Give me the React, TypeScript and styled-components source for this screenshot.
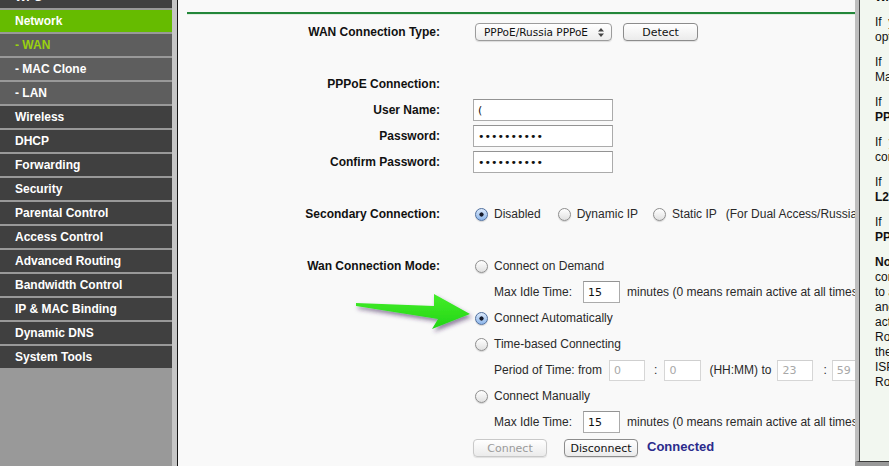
import React from "react";
import styled, { createGlobalStyle } from "styled-components";

const GlobalStyle = createGlobalStyle`
  html, body {
    margin: 0;
    padding: 0;
    height: 100%;
    overflow: hidden;
  }
  body {
    font-family: "Liberation Sans", Arial, sans-serif;
    font-size: 12px;
    background: #999999;
  }
`;

const Page = styled.div`
  display: flex;
  width: 889px;
  height: 466px;
  overflow: hidden;
`;

/* ---------- sidebar ---------- */

const SideFrame = styled.div`
  flex: 0 0 auto;
  height: 100%;
  border-right: 1px solid #161616;
`;

const Sidebar = styled.nav`
  width: 172px;
  height: 100%;
  background: #999999;
  border-right: 5px solid #c6c6c6;
  overflow: hidden;
`;

const MenuList = styled.div`
  display: flex;
  flex-direction: column;
  gap: 2px;
  margin-top: -14px;
`;

type MenuKind = "main" | "sub" | "active" | "current";

const MenuItem = styled.div<{ $kind: MenuKind }>`
  height: 22px;
  display: flex;
  align-items: center;
  padding-left: 15px;
  font-weight: bold;
  font-size: 12px;
  white-space: nowrap;
  color: ${(p) => (p.$kind === "current" ? "#99d10f" : "#ffffff")};
  background: ${(p) =>
    p.$kind === "active"
      ? "#66bb00"
      : p.$kind === "sub" || p.$kind === "current"
      ? "#5e5e5e"
      : "#404040"};
`;

const menu: { label: string; kind: MenuKind }[] = [
  { label: "WPS", kind: "main" },
  { label: "Network", kind: "active" },
  { label: "- WAN", kind: "current" },
  { label: "- MAC Clone", kind: "sub" },
  { label: "- LAN", kind: "sub" },
  { label: "Wireless", kind: "main" },
  { label: "DHCP", kind: "main" },
  { label: "Forwarding", kind: "main" },
  { label: "Security", kind: "main" },
  { label: "Parental Control", kind: "main" },
  { label: "Access Control", kind: "main" },
  { label: "Advanced Routing", kind: "main" },
  { label: "Bandwidth Control", kind: "main" },
  { label: "IP & MAC Binding", kind: "main" },
  { label: "Dynamic DNS", kind: "main" },
  { label: "System Tools", kind: "main" },
];

/* ---------- main form ---------- */

const Main = styled.main`
  position: relative;
  flex: 0 0 auto;
  width: 668px;
  height: 100%;
  padding: 12px 0 0 9px;
  background: #f9f9f9;
  overflow: hidden;
`;

const Rule = styled.div`
  height: 2px;
  background: #23873a;
  box-shadow: 0 1px 0 #e2ede2;
`;

const Form = styled.div`
  margin-top: 5px;
  display: flex;
  flex-direction: column;
  white-space: nowrap;
`;

const Row = styled.div`
  height: 26px;
  display: flex;
  align-items: center;
`;

const Label = styled.div`
  flex: 0 0 253px;
  margin-right: 33px;
  text-align: right;
  font-weight: bold;
  color: #111;
`;

const Field = styled.div<{ $indent?: number }>`
  display: flex;
  align-items: center;
  padding-left: ${(p) => p.$indent ?? 0}px;
  color: #2a2a2a;
  font-size: 12px;
`;

const SelectBox = styled.div`
  box-sizing: border-box;
  width: 137px;
  height: 18px;
  margin-left: 2px;
  padding: 0 7px 0 8px;
  display: flex;
  align-items: center;
  justify-content: space-between;
  border: 1px solid #9c9c9c;
  border-radius: 4px;
  background: linear-gradient(#ffffff, #ededed);
  box-shadow: 0 1px 1px rgba(0, 0, 0, 0.12);
  font-family: "DejaVu Sans", sans-serif;
  font-size: 10.5px;
  color: #111;
`;

const MacButton = styled.button<{ $width: number; $disabled?: boolean }>`
  box-sizing: border-box;
  width: ${(p) => p.$width}px;
  height: 18px;
  padding: 0;
  border: 1px solid ${(p) => (p.$disabled ? "#c9c9c9" : "#8c8c8c")};
  border-radius: 4px;
  background: linear-gradient(#ffffff, #ebebeb);
  box-shadow: 0 1px 1px rgba(0, 0, 0, 0.1);
  font-family: "DejaVu Sans", sans-serif;
  font-size: 11px;
  color: ${(p) => (p.$disabled ? "#9a9a9a" : "#111")};
`;

const TextInput = styled.input<{ $width: number; $height?: number; $muted?: boolean }>`
  box-sizing: border-box;
  width: ${(p) => p.$width}px;
  height: ${(p) => p.$height ?? 22}px;
  margin: 0;
  padding: 0 0 0 4px;
  border: 1px solid ${(p) => (p.$muted ? "#d6d6d6" : "#ababab")};
  border-top-color: ${(p) => (p.$muted ? "#cfcfcf" : "#939393")};
  background: #fff;
  font-family: "DejaVu Sans", sans-serif;
  font-size: 11px;
  color: ${(p) => (p.$muted ? "#a8a8a8" : "#111")};
  outline: none;
`;

const Option = styled.label<{ $gap?: number }>`
  display: inline-flex;
  align-items: center;
  gap: 6px;
  margin-left: 2px;
  margin-right: ${(p) => p.$gap ?? 0}px;
  color: #2a2a2a;
`;

const RadioDot = styled.span<{ $checked?: boolean }>`
  box-sizing: border-box;
  flex: 0 0 auto;
  width: 13px;
  height: 13px;
  border-radius: 50%;
  border: 1px solid ${(p) => (p.$checked ? "#50709f" : "#8e8e8e")};
  background: ${(p) =>
    p.$checked
      ? "radial-gradient(circle, #161c2c 0 1.8px, transparent 2.4px), linear-gradient(#dbe9fb, #8db6ea)"
      : "linear-gradient(#ffffff, #e0e0e0)"};
  box-shadow: 0 1px 1px rgba(0, 0, 0, 0.15);
`;

const Gap = styled.span<{ $w: number }>`
  display: inline-block;
  width: ${(p) => p.$w}px;
`;

const Status = styled.span`
  margin-left: 9px;
  margin-top: -3px;
  font-weight: bold;
  font-size: 13px;
  color: #2b2b8c;
`;

const ArrowSvg = styled.svg`
  position: absolute;
  left: 172px;
  top: 288px;
`;

/* ---------- help panel ---------- */

const Help = styled.aside`
  flex: 0 0 auto;
  box-sizing: border-box;
  width: 380px;
  height: 462px;
  border-left: 4px solid #bebebe;
  border-bottom: 1px solid #3a3a3a;
  box-shadow: inset 1px 0 0 #4a4a4a;
  background: #f2f7f0;
  padding: 0 20px 0 16px;
  overflow: hidden;
  color: #111;
  font-size: 12px;
  line-height: 15px;
`;

const HelpInner = styled.div`
  margin-top: -10px;
`;

const Para = styled.div`
  margin-bottom: 10px;
`;

const Line = styled.div<{ $justify?: boolean }>`
  text-align: ${(p) => (p.$justify ? "justify" : "left")};
  text-align-last: ${(p) => (p.$justify ? "justify" : "auto")};
  white-space: ${(p) => (p.$justify ? "normal" : "nowrap")};
`;

function Radio({ checked, children, gap }: { checked?: boolean; children: React.ReactNode; gap?: number }) {
  return (
    <Option $gap={gap}>
      <RadioDot $checked={checked} />
      {children}
    </Option>
  );
}

export default function App() {
  return (
    <>
      <GlobalStyle />
      <Page>
        <SideFrame>
          <Sidebar>
            <MenuList>
              {menu.map((m) => (
                <MenuItem key={m.label} $kind={m.kind}>
                  {m.label}
                </MenuItem>
              ))}
            </MenuList>
          </Sidebar>
        </SideFrame>

        <Main>
          <Rule />
          <Form>
            <Row>
              <Label>WAN Connection Type:</Label>
              <Field>
                <SelectBox>
                  <span>PPPoE/Russia PPPoE</span>
                  <svg width="6" height="9" viewBox="0 0 6 9">
                    <path d="M3 0 L6 3.5 H0 Z M3 9 L6 5.5 H0 Z" fill="#444" />
                  </svg>
                </SelectBox>
                <Gap $w={11} />
                <MacButton $width={75}>Detect</MacButton>
              </Field>
            </Row>
            <Row />
            <Row>
              <Label>PPPoE Connection:</Label>
            </Row>
            <Row>
              <Label>User Name:</Label>
              <Field>
                <TextInput $width={140} readOnly value="(" />
              </Field>
            </Row>
            <Row>
              <Label>Password:</Label>
              <Field>
                <TextInput $width={140} type="password" readOnly value="1234567890" />
              </Field>
            </Row>
            <Row>
              <Label>Confirm Password:</Label>
              <Field>
                <TextInput $width={140} type="password" readOnly value="1234567890" />
              </Field>
            </Row>
            <Row />
            <Row>
              <Label>Secondary Connection:</Label>
              <Field>
                <Radio checked gap={15}>Disabled</Radio>
                <Radio gap={13}>Dynamic IP</Radio>
                <Radio gap={9}>Static IP</Radio>
                <span>(For Dual Access/Russia PPPoE)</span>
              </Field>
            </Row>
            <Row />
            <Row>
              <Label>Wan Connection Mode:</Label>
              <Field>
                <Radio>Connect on Demand</Radio>
              </Field>
            </Row>
            <Row>
              <Label />
              <Field $indent={21}>
                Max Idle Time:
                <Gap $w={11} />
                <TextInput $width={37} readOnly value="15" />
                <Gap $w={7} />
                minutes (0 means remain active at all times.)
              </Field>
            </Row>
            <Row>
              <Label />
              <Field>
                <Radio checked>Connect Automatically</Radio>
              </Field>
            </Row>
            <Row>
              <Label />
              <Field>
                <Radio>Time-based Connecting</Radio>
              </Field>
            </Row>
            <Row>
              <Label />
              <Field $indent={21}>
                Period of Time: from
                <Gap $w={7} />
                <TextInput $width={36} $height={21} $muted readOnly value="0" />
                <Gap $w={9} />:<Gap $w={7} />
                <TextInput $width={37} $height={21} $muted readOnly value="0" />
                <Gap $w={8} />
                (HH:MM) to
                <Gap $w={6} />
                <TextInput $width={36} $height={21} $muted readOnly value="23" />
                <Gap $w={10} />:<Gap $w={5} />
                <TextInput $width={36} $height={21} $muted readOnly value="59" />
              </Field>
            </Row>
            <Row>
              <Label />
              <Field>
                <Radio>Connect Manually</Radio>
              </Field>
            </Row>
            <Row>
              <Label />
              <Field $indent={21}>
                Max Idle Time:
                <Gap $w={11} />
                <TextInput $width={37} readOnly value="15" />
                <Gap $w={7} />
                minutes (0 means remain active at all times.)
              </Field>
            </Row>
            <Row>
              <Label />
              <Field>
                <MacButton $width={74} $disabled disabled>
                  Connect
                </MacButton>
                <Gap $w={17} />
                <MacButton $width={74}>Disconnect</MacButton>
                <Status>Connected</Status>
              </Field>
            </Row>
          </Form>

          <ArrowSvg width="130" height="52" viewBox="0 0 130 52">
            <defs>
              <filter id="arrowShadow" x="-20%" y="-30%" width="140%" height="170%">
                <feDropShadow dx="2" dy="3" stdDeviation="2" floodColor="#3a1d55" floodOpacity="0.55" />
              </filter>
              <linearGradient id="arrowFill" x1="0" y1="0" x2="0" y2="1">
                <stop offset="0" stopColor="#44ee2a" />
                <stop offset="1" stopColor="#22d414" />
              </linearGradient>
            </defs>
            <polygon
              points="6,15 84,18 84,6 120,26 82,41 88,31 6,18"
              fill="url(#arrowFill)"
              filter="url(#arrowShadow)"
            />
          </ArrowSvg>
        </Main>

        <Help>
          <HelpInner>
            <Para>
              <Line>
                <b>WAN Connection Type:</b>
              </Line>
            </Para>
            <Para>
              <Line $justify>If your ISP is running DHCP server, select the Dynamic IP</Line>
              <Line>option.</Line>
            </Para>
            <Para>
              <Line $justify>If your ISP gives you a fixed IP Address, Subnet</Line>
              <Line>Mask, Gateway and DNS setting, select Static IP.</Line>
            </Para>
            <Para>
              <Line $justify>If your ISP provides PPPoE connection, select</Line>
              <Line>
                <b>PPPoE/Russia PPPoE</b>.
              </Line>
            </Para>
            <Para>
              <Line $justify>If your ISP provides BigPond Cable (or Heart Beat Signal)</Line>
              <Line>connection, please select BigPond Cable.</Line>
            </Para>
            <Para>
              <Line $justify>If your ISP provides L2TP connection, select</Line>
              <Line>
                <b>L2TP/Russia L2TP</b>.
              </Line>
            </Para>
            <Para>
              <Line $justify>If your ISP provides PPTP connection, select</Line>
              <Line>
                <b>PPTP/Russia PPTP</b>.
              </Line>
            </Para>
            <Para>
              <Line>
                <b>Note:</b> If you do not know how to choose the appropriate
              </Line>
              <Line>connection type, click the Detect button to allow the Router</Line>
              <Line>to automatically search your Internet connection for servers</Line>
              <Line>and protocols. The connection type will be reported when an</Line>
              <Line>active Internet service is successfully detected by the</Line>
              <Line>Router. This report is for your reference only. To make sure</Line>
              <Line>the connection type your ISP provides, please refer to the</Line>
              <Line>ISP. The various types of Internet connections that the</Line>
              <Line>Router can detect are as follows:</Line>
            </Para>
          </HelpInner>
        </Help>
      </Page>
    </>
  );
}
